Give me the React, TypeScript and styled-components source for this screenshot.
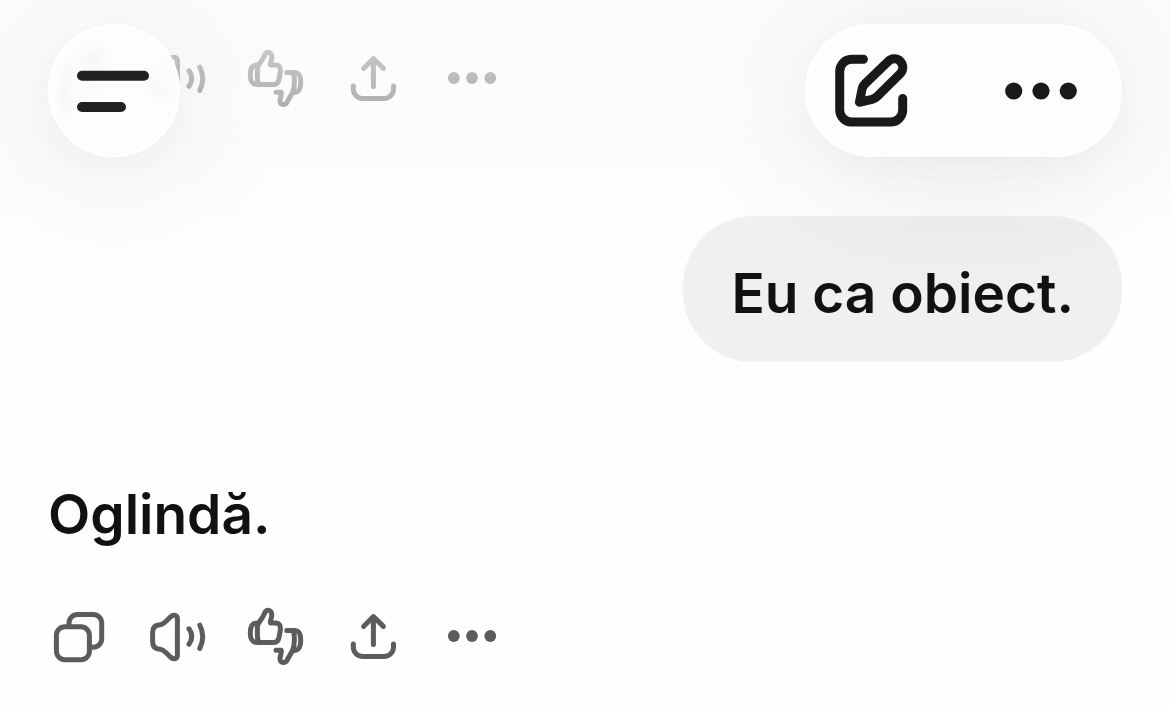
import React from 'react';
import styled, { createGlobalStyle } from 'styled-components';

const GlobalStyle = createGlobalStyle`
  * { box-sizing: border-box; }
  body {
    margin: 0;
    background: #fefefe;
    color: #111;
    font-family: Inter, "Liberation Sans", sans-serif;
  }
`;

const TopBar = styled.header`
  position: fixed;
  inset: 0 0 auto 0;
  z-index: 2;
  display: flex;
  justify-content: space-between;
  padding: 24px 48px 76px;
  background: linear-gradient(
    to bottom,
    rgba(251, 251, 251, 0.8) 0,
    rgba(250, 250, 250, 0.68) 52px,
    rgba(250, 250, 250, 0.53) 108px,
    rgba(252, 252, 252, 0.4) 166px,
    rgba(254, 254, 254, 0) 232px
  );
`;

const Glass = styled.div`
  display: flex;
  height: 133px;
  border-radius: 67px;
  background: rgba(253, 253, 253, 0.95);
  backdrop-filter: blur(5px);
  box-shadow:
    inset 0 0 3px 2px #fff,
    0 20px 140px rgba(0, 0, 0, 0.09),
    0 8px 40px rgba(0, 0, 0, 0.03);
`;

const ToolGroup = styled(Glass)`
  gap: 38px;
  padding-right: 15px;
`;

const BarButton = styled.button`
  display: grid;
  place-items: center;
  width: 132px;
  height: 132px;
  padding: 0;
  border: 0;
  border-radius: 66px;
  background: transparent;
  color: #191919;
  cursor: pointer;
`;

const MenuButton = styled(BarButton)`
  background:
    radial-gradient(ellipse 16px 24px at 46px 36px, rgba(0, 0, 0, 0.025), transparent),
    radial-gradient(ellipse 10px 36px at 18px 66px, rgba(0, 0, 0, 0.025), transparent),
    radial-gradient(circle 14px at 110px 63px, rgba(0, 0, 0, 0.02), transparent);
  color: #222;
`;

const Thread = styled.main`
  display: flex;
  flex-direction: column;
  padding: 48px 48px 44px;
`;

const Actions = styled.div`
  display: flex;
  gap: 38px;
`;

const ActionButton = styled.button`
  width: 60px;
  height: 60px;
  padding: 0;
  border: 0;
  background: transparent;
  color: #5c5c5c;
  cursor: pointer;
`;

const Icon = styled.svg`
  display: block;
  overflow: visible;
  fill: none;
  stroke: currentColor;
  stroke-linecap: round;
  stroke-linejoin: round;

  .solid {
    fill: currentColor;
    stroke: none;
  }
`;

const UserBubble = styled.p`
  align-self: flex-end;
  margin: 108px 0 0;
  padding: 43px 48px 35px;
  border-radius: 70px;
  background: #f0f0f0;
  font-size: 55px;
  line-height: 68px;
  font-weight: 600;
`;

const Reply = styled.p`
  margin: 118px 0 58px;
  font-size: 55px;
  line-height: 68px;
  font-weight: 600;
`;

type IconProps = { children: React.ReactNode };

const ActionIcon = ({ children }: IconProps) => (
  <Icon width="60" height="60" viewBox="-2 0 60 60" strokeWidth="5" aria-hidden="true">
    {children}
  </Icon>
);

const BarIcon = ({ children }: IconProps) => (
  <Icon width="80" height="80" viewBox="0 0 80 80" strokeWidth="9" aria-hidden="true">
    {children}
  </Icon>
);

const MessageActions = () => (
  <Actions>
    <ActionButton type="button" aria-label="Copiază">
      <ActionIcon>
        <rect x="6.4" y="20.8" width="33" height="33" rx="8.5" />
        <path d="M19 19.5V17a8.5 8.5 0 0 1 8.5-8.5h15.7a8.5 8.5 0 0 1 8.5 8.5v15.7a8.5 8.5 0 0 1-8.5 8.5H41" />
      </ActionIcon>
    </ActionButton>
    <ActionButton type="button" aria-label="Citește cu voce tare">
      <ActionIcon>
        <path d="M4.6 31V26.5C4.6 21 7.5 18.9 12 18.7C15.8 18.3 17.5 15.5 22.6 10.8C25.5 8.1 29.4 9.3 29.4 12.8V49.2C29.4 52.7 25.5 53.9 22.6 51.2C17.5 46.5 15.8 43.7 12 43.3C7.5 43.1 4.6 41 4.6 35.5Z" />
        <path d="M41 22.8Q46.6 30.4 41 38.2M51.8 19.2Q57.6 30.6 51.8 42.4" />
      </ActionIcon>
    </ActionButton>
    <ActionButton type="button" aria-label="Evaluează răspunsul">
      <ActionIcon>
        <path d="M12.6 17H11C6.3 17 4.3 20 4.3 27C4.3 33.5 6 36.5 11.5 36.5H28C31.3 36.5 32.4 34.6 33.1 31L34.3 24C34.9 19 33 17.2 30 17H24.4C24 14.2 26 12 25.8 8.5C25.4 4 20.8 3.2 19.3 5.8L16.7 11C14.5 14.5 11.6 17 11.4 21V30C11.4 33 12 35 13.4 36.5" />
        <path d="M40.8 24.4H48C53 24.4 54.7 27.2 54.7 34C54.7 41 53 44.2 48 44.6" />
        <path d="M47 24.6C48.8 28 49 38.5 46.7 44.2L41 54.3C38.5 58 33.6 56.7 34 52C34.2 49 36.2 47 35.2 44.2H30" />
      </ActionIcon>
    </ActionButton>
    <ActionButton type="button" aria-label="Distribuie">
      <ActionIcon>
        <path d="M29.4 38.4V10.8M19.6 20.4L29.4 10.6L39.4 20.4" />
        <path d="M9.3 38V41a9.4 9.4 0 0 0 9.4 9.4h21.4a9.4 9.4 0 0 0 9.4-9.4V38" />
      </ActionIcon>
    </ActionButton>
    <ActionButton type="button" aria-label="Mai multe">
      <ActionIcon>
        <g className="solid">
          <circle cx="11.8" cy="30" r="5.9" />
          <circle cx="30" cy="30" r="5.9" />
          <circle cx="48.3" cy="30" r="5.9" />
        </g>
      </ActionIcon>
    </ActionButton>
  </Actions>
);

export default function App() {
  return (
    <>
      <GlobalStyle />
      <TopBar>
        <Glass>
          <MenuButton type="button" aria-label="Meniu">
            <BarIcon>
              <path strokeWidth="10" d="M8 25.8H70M8 57H47" />
            </BarIcon>
          </MenuButton>
        </Glass>
        <ToolGroup>
          <BarButton type="button" aria-label="Conversație nouă">
            <BarIcon>
              <path d="M32.4 9.3H20.7a12 12 0 0 0-12 12V60a12 12 0 0 0 12 12H59.7a12 12 0 0 0 12-12V48.5" />
              <path d="M28.4 52.3L31.2 38.6Q31.8 36 33.8 34L56.6 12C60.6 7.9 66 8 69.2 11.2C72.7 14.8 72.7 20 69 23.8L46.4 46.2Q44 48.6 41 49.4Z" />
            </BarIcon>
          </BarButton>
          <BarButton type="button" aria-label="Mai multe opțiuni">
            <BarIcon>
              <g className="solid">
                <circle cx="12.7" cy="41" r="8.6" />
                <circle cx="40" cy="41" r="8.6" />
                <circle cx="67.3" cy="41" r="8.6" />
              </g>
            </BarIcon>
          </BarButton>
        </ToolGroup>
      </TopBar>
      <Thread>
        <MessageActions />
        <UserBubble>Eu ca obiect.</UserBubble>
        <Reply>Oglindă.</Reply>
        <MessageActions />
      </Thread>
    </>
  );
}
